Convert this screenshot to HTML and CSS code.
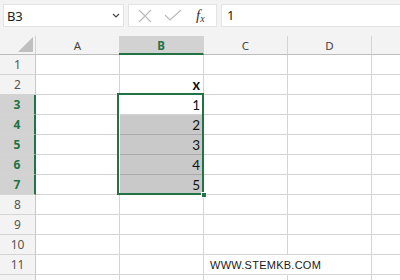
FILE: index.html
```html
<!DOCTYPE html>
<html>
<head>
<meta charset="utf-8">
<link rel="stylesheet" href="styles.css">
</head>
<body>
<div class="app">
  <div class="fbar">
    <div class="namebox">
      <span class="nb-text">B3</span>
      <svg class="chev" width="8" height="5" viewBox="0 0 8 5"><path d="M1 1 L4 4 L7 1" fill="none" stroke="#444" stroke-width="1.2"/></svg>
    </div>
    <div class="fxbox">
      <svg class="ico-x" width="14" height="14" viewBox="0 0 14 14"><path d="M1 1 L13 13 M13 1 L1 13" stroke="#b9b9b9" stroke-width="1.1" fill="none"/></svg>
      <svg class="ico-ok" width="18" height="12" viewBox="0 0 18 12"><path d="M1 6 L6 11 L17 1" stroke="#b9b9b9" stroke-width="1.1" fill="none"/></svg>
      <span class="fx">f<span class="fxsub">x</span></span>
    </div>
    <div class="formula">1</div>
  </div>
  <div class="sheet">
    <div class="grid">
      <div class="corner"><span class="tri"></span></div>
      <div class="ch">A</div>
      <div class="ch sel">B</div>
      <div class="ch">C</div>
      <div class="ch">D</div>
      <div class="ch"></div>

      <div class="rh">1</div><div class="c"></div><div class="c"></div><div class="c"></div><div class="c"></div><div class="c"></div>
      <div class="rh">2</div><div class="c"></div><div class="c num bold">x</div><div class="c"></div><div class="c"></div><div class="c"></div>
      <div class="rh sel">3</div><div class="c"></div><div class="c num">1</div><div class="c"></div><div class="c"></div><div class="c"></div>
      <div class="rh sel">4</div><div class="c"></div><div class="c num hl">2</div><div class="c"></div><div class="c"></div><div class="c"></div>
      <div class="rh sel">5</div><div class="c"></div><div class="c num hl">3</div><div class="c"></div><div class="c"></div><div class="c"></div>
      <div class="rh sel">6</div><div class="c"></div><div class="c num hl">4</div><div class="c"></div><div class="c"></div><div class="c"></div>
      <div class="rh sel">7</div><div class="c"></div><div class="c num hl">5</div><div class="c"></div><div class="c"></div><div class="c"></div>
      <div class="rh">8</div><div class="c"></div><div class="c"></div><div class="c"></div><div class="c"></div><div class="c"></div>
      <div class="rh">9</div><div class="c"></div><div class="c"></div><div class="c"></div><div class="c"></div><div class="c"></div>
      <div class="rh">10</div><div class="c"></div><div class="c"></div><div class="c"></div><div class="c"></div><div class="c"></div>
      <div class="rh">11</div><div class="c"></div><div class="c"></div><div class="c over"><span class="wm">WWW.STEMKB.COM</span></div><div class="c"></div><div class="c"></div>
      <div class="rh"></div><div class="c"></div><div class="c"></div><div class="c"></div><div class="c"></div><div class="c"></div>
    </div>
    <div class="selection"><div class="handle"></div></div>
  </div>
</div>
</body>
</html>
```

FILE: styles.css
```css
html, body {
  margin: 0;
  padding: 0;
}
body {
  width: 400px;
  height: 280px;
  overflow: hidden;
  background: #f3f3f3;
  font-family: "Noto Sans", "Open Sans", sans-serif;
}
.app {
  display: flex;
  flex-direction: column;
  width: 400px;
  height: 280px;
  overflow: hidden;
}
.fbar {
  height: 36px;
  flex: none;
  box-sizing: border-box;
  padding: 4px 0 0 3px;
  display: flex;
  align-items: flex-start;
  gap: 4px;
}
.namebox {
  width: 121px;
  height: 23px;
  box-sizing: border-box;
  background: #fff;
  border: 1px solid #e3e3e3;
  display: flex;
  align-items: center;
  justify-content: space-between;
  padding: 0 3px 0 3px;
}
.nb-text {
  font-size: 13px;
  color: #222;
  letter-spacing: -0.3px;
}
.fxbox {
  width: 89px;
  height: 23px;
  box-sizing: border-box;
  background: #fff;
  border: 1px solid #e3e3e3;
  display: flex;
  align-items: center;
  padding-left: 9px;
}
.ico-x {
  margin-right: 12px;
}
.ico-ok {
  margin-right: 14px;
  margin-top: -1px;
}
.fx {
  font-family: "Liberation Serif", serif;
  font-style: italic;
  font-size: 15px;
  color: #333;
  line-height: 1;
}
.fxsub {
  font-size: 10px;
  vertical-align: -2px;
}
.formula {
  flex: 1;
  height: 23px;
  box-sizing: border-box;
  background: #fff;
  border: 1px solid #e3e3e3;
  border-right: none;
  font-size: 13px;
  color: #222;
  padding-left: 5px;
  line-height: 20px;
}
.sheet {
  position: relative;
  flex: 1;
  overflow: hidden;
}
.grid {
  display: grid;
  grid-template-columns: 36px repeat(5, 84px);
  grid-template-rows: 19px repeat(12, 20px);
}
.grid > div {
  box-sizing: border-box;
  border-right: 1px solid #d4d4d4;
  border-bottom: 1px solid #d4d4d4;
}
.corner {
  background: #f3f3f3;
  position: relative;
  border-bottom-color: #bdbdbd !important;
}
.tri {
  position: absolute;
  right: 2px;
  bottom: 2px;
  width: 0;
  height: 0;
  border-left: 15px solid transparent;
  border-bottom: 15px solid #bfbfbf;
}
.ch {
  background: #f3f3f3;
  border-bottom-color: #bdbdbd !important;
  font-size: 11.5px;
  color: #444;
  display: flex;
  align-items: center;
  justify-content: center;
  padding-top: 1px;
}
.ch.sel {
  background: #d2d2d2;
  color: #217346;
  font-weight: bold;
  border-bottom: 2px solid #217346 !important;
  margin-left: -1px;
}
.rh {
  background: #f3f3f3;
  border-right-color: #c8c8c8 !important;
  font-size: 12px;
  color: #555;
  display: flex;
  align-items: center;
  justify-content: center;
}
.rh.sel {
  background: #d2d2d2;
  color: #217346;
  font-weight: bold;
  border-right: 2px solid #217346 !important;
}
.c {
  background: #fff;
}
.num {
  font-family: "Lato", "Liberation Sans", sans-serif;
  font-size: 13.5px;
  color: #111;
  display: flex;
  align-items: flex-end;
  justify-content: flex-end;
  padding: 0 3px 2px 0;
  line-height: 1;
}
.bold {
  font-weight: bold;
  font-size: 14.5px;
}
.hl {
  background: #c9c9c9;
  border-bottom-color: #aaaaaa !important;
}
.over {
  position: relative;
  border-right-color: #fff !important;
}
.wm {
  position: absolute;
  left: 6px;
  top: 4px;
  white-space: nowrap;
  font-family: "Liberation Sans", sans-serif;
  font-size: 11px;
  letter-spacing: 0.25px;
  color: #1a1a1a;
}
.selection {
  position: absolute;
  left: 117px;
  top: 57px;
  width: 87px;
  height: 102px;
  box-sizing: border-box;
  border: 2px solid #217346;
  box-shadow: inset 1px 0 0 #fff;
}
.handle {
  position: absolute;
  right: -5px;
  bottom: -5px;
  width: 6px;
  height: 6px;
  box-sizing: border-box;
  background: #217346;
  border: 1px solid #fff;
}
```
